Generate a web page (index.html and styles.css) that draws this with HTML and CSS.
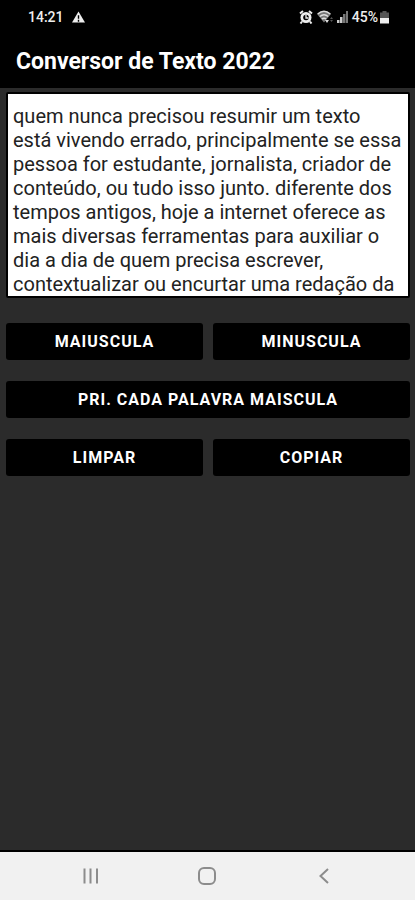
FILE: index.html
```
<!DOCTYPE html>
<html lang="pt-BR">
<head>
  <meta charset="UTF-8">
  <meta name="viewport" content="width=device-width, initial-scale=1">
  <title>Conversor de Texto 2022</title>
  <link rel="stylesheet" href="styles.css">
</head>
<body>

  <header>
    <div class="status">
      <span class="hora">14:21</span>
      <svg class="alerta" width="13" height="12" viewBox="0 0 14 12">
        <path d="M7 0L14 12H0Z" fill="#eee"/>
        <path d="M7 4v4M7 9v2" stroke="#000" stroke-width="1.5"/>
      </svg>
      <div class="icones">
        <!-- alarme -->
        <svg width="14" height="14" viewBox="0 0 14 14">
          <circle cx="7" cy="7.5" r="5.5" fill="#eee"/>
          <path d="M1 3.5L4 1M13 3.5L10 1M3 11.5L1.5 13.5M11 11.5L12.5 13.5" stroke="#eee" stroke-width="2"/>
          <circle cx="7" cy="7.5" r="2.8" fill="#000"/>
          <path d="M7 5v3h2.5" stroke="#eee" stroke-width="1.3" fill="none"/>
        </svg>
        <!-- wifi -->
        <svg width="16" height="14" viewBox="0 0 16 14">
          <path d="M0 4Q7 -2 14 4L7 12.5Z" fill="#777"/>
          <path d="M.7 4Q7 -1.5 13.3 4M2.8 6.5Q7 3 11.2 6.5M4.8 9Q7 7.3 9.2 9" stroke="#ddd" stroke-width="1.5" fill="none"/>
          <path d="M8 10h4L10 13Z" fill="#ddd"/>
          <path d="M13 9l1.5-2 1.5 2M13 10l1.5 2 1.5-2" fill="#555"/>
        </svg>
        <!-- sinal -->
        <svg width="11" height="12" viewBox="0 0 11 12">
          <path d="M0 9h2.5v3H0zM3 6h2.5v6H3z" fill="#ccc"/>
          <path d="M6 3h2.5v9H6zM9 0h2v12H9z" fill="#777"/>
        </svg>
        <div class="bateria">
          <span>45%</span>
          <svg width="9" height="13" viewBox="0 0 9 13">
            <path d="M2.5 0h4v1.5H9V7H0V1.5h2.5z" fill="#555"/>
            <path d="M0 7h9v5.5H0z" fill="#eee"/>
          </svg>
        </div>
      </div>
    </div>
    <h1>Conversor de Texto 2022</h1>
  </header>

  <main>
    <textarea id="texto" aria-label="Texto">quem nunca precisou resumir um texto está vivendo errado, principalmente se essa pessoa for estudante, jornalista, criador de conteúdo, ou tudo isso junto. diferente dos tempos antigos, hoje a internet oferece as mais diversas ferramentas para auxiliar o dia a dia de quem precisa escrever, contextualizar ou encurtar uma redação da</textarea>

    <div class="botoes">
      <button type="button" id="maiuscula">MAIUSCULA</button>
      <button type="button" id="minuscula">MINUSCULA</button>
      <button type="button" id="primeira" class="largo">PRI. CADA PALAVRA MAISCULA</button>
      <button type="button" id="limpar">LIMPAR</button>
      <button type="button" id="copiar">COPIAR</button>
    </div>
  </main>

  <nav>
    <button type="button" aria-label="Recentes">
      <svg width="18" height="18" viewBox="0 0 18 18">
        <path d="M2.5 1.5v15M8.5 1.5v15M15 1.5v15"/>
      </svg>
    </button>
    <button type="button" aria-label="Início">
      <svg width="18" height="18" viewBox="0 0 18 18">
        <rect x="1" y="1" width="16" height="16" rx="5"/>
      </svg>
    </button>
    <button type="button" aria-label="Voltar">
      <svg width="18" height="18" viewBox="0 0 18 18">
        <path d="M13 2L5.5 9L13 16"/>
      </svg>
    </button>
  </nav>

  <script>
    const texto = document.getElementById("texto");

    document.getElementById("maiuscula").addEventListener("click", function () {
      texto.value = texto.value.toUpperCase();
    });

    document.getElementById("minuscula").addEventListener("click", function () {
      texto.value = texto.value.toLowerCase();
    });

    // Primeira letra de cada palavra
    document.getElementById("primeira").addEventListener("click", function () {
      texto.value = texto.value
        .split(" ")
        .map(p => p.charAt(0).toUpperCase() + p.slice(1))
        .join(" ");
    });

    document.getElementById("limpar").addEventListener("click", function () {
      texto.value = "";
    });

    document.getElementById("copiar").addEventListener("click", function () {
      texto.select();
      document.execCommand("copy");
    });
  </script>
</body>
</html>
```

FILE: styles.css
```
* {
  box-sizing: border-box;
}
body {
  margin: 0;
  min-height: 100vh;
  display: flex;
  flex-direction: column;
  background-color: #2b2b2b;
  font-family: Roboto, sans-serif;
}
header {
  padding: 8px 16px 11px;
  background: #000;
  color: #fff;
}
.status {
  display: flex;
  align-items: center;
  gap: 8px;
  height: 18px;
  padding: 0 10px 0 12px;
  font-size: 14px;
  font-weight: 500;
  color: #eee;
}
.icones {
  display: flex;
  align-items: center;
  gap: 4px;
  margin-left: auto;
}
.bateria {
  display: flex;
  align-items: center;
  gap: 2px;
}
h1 {
  margin: 21px 0 0;
  font-size: 23px;
  line-height: 30px;
  font-weight: 700;
}
main {
  flex: 1;
  padding: 4px 5px 24px 6px;
}
textarea {
  display: block;
  width: 100%;
  height: 206px;
  padding: 10px 5px 0;
  border: 2px solid #000;
  border-radius: 2px;
  background: #fff;
  color: #222;
  font-family: inherit;
  font-size: 20px;
  line-height: 24px;
  resize: none;
  outline: none;
  scrollbar-width: none;
}
.botoes {
  display: grid;
  grid-template-columns: 1fr 1fr;
  gap: 21px 10px;
  margin-top: 25px;
}
.botoes button {
  height: 37px;
  padding: 0 8px;
  border: 0;
  border-radius: 3px;
  background: #000;
  color: #fff;
  font-family: inherit;
  font-size: 16px;
  font-weight: 700;
  letter-spacing: 1px;
}
.largo {
  grid-column: 1 / -1;
}
nav {
  display: flex;
  height: 50px;
  padding: 0 8%;
  border-top: 2px solid #000;
  background: #f1f1f1;
}
nav button {
  flex: 1;
  padding: 0;
  border: 0;
  background: none;
}
nav svg {
  display: block;
  margin: auto;
  fill: none;
  stroke: #8c8c8c;
  stroke-width: 2;
}
```
